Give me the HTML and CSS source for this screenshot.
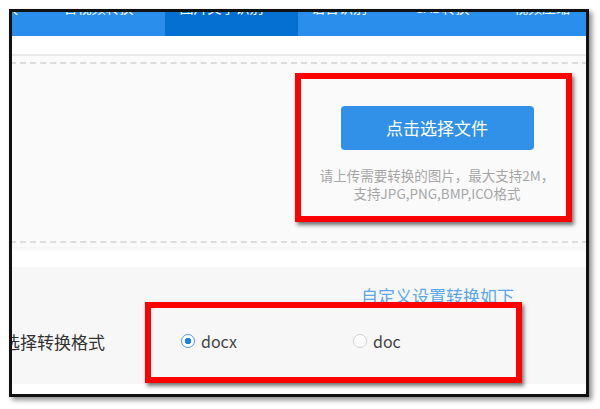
FILE: index.html
```html
<!DOCTYPE html>
<html lang="zh-CN">
<head>
    <meta charset="UTF-8">
    <meta name="viewport" content="width=device-width, initial-scale=1.0">
    <title>图片文字识别</title>
    <link rel="stylesheet" href="styles.css">
</head>
<body>
    <div class="shot">
        <ul class="nav">
            <li class="nav-item nav-first">换</li>
            <li class="nav-item nav-w1">音视频转换</li>
            <li class="nav-item nav-w1 active">图片文字识别</li>
            <li class="nav-item nav-w2">语音识别</li>
            <li class="nav-item nav-w3">CAD转换</li>
            <li class="nav-item nav-w4">视频压缩</li>
        </ul>

        <div class="gap-strip"></div>

        <div class="upload-wrap">
            <div class="upload-box">
                <div class="upload-col">
                    <div class="btn-upload">点击选择文件</div>
                    <p class="upload-tip">请上传需要转换的图片，最大支持2M，</p>
                    <p class="upload-tip">支持JPG,PNG,BMP,ICO格式</p>
                </div>
            </div>
        </div>

        <div class="options">
            <div class="custom-link">自定义设置转换如下</div>
            <div class="format-row">
                <span class="format-label">选择转换格式</span>
                <label class="radio radio-docx checked"><i></i>docx</label>
                <label class="radio"><i></i>doc</label>
            </div>
        </div>

        <!-- 标注框 -->
        <div class="mark mark-upload"></div>
        <div class="mark mark-format"></div>
    </div>
</body>
</html>
```

FILE: styles.css
```css
* {
    margin: 0;
    padding: 0;
}

html,
body {
    height: 100%;
    overflow: hidden;
    background-color: #fff;
}

body {
    font-family: "Noto Sans CJK SC", "Noto Sans", sans-serif;
    font-size: 14px;
    color: #333;
}

.shot {
    width: 574px;
    height: 382px;
    margin: 9px 0 0 9px;
    position: relative;
    overflow: hidden;
    border: 3px solid #111;
    box-shadow: 3px 3px 5px rgba(0,0,0,.45);
    background-color: #fff;
}

/* 顶部导航（截图只露出文字的下半截） */
.nav {
    height: 24px;
    display: flex;
    list-style: none;
    overflow: hidden;
    background-color: #2a8eec;
}

.nav .nav-item {
    height: 36px;
    margin-top: -12px;
    color: #fff;
    font-size: 14px;
    line-height: 14px;
    text-align: center;
    white-space: nowrap;
    overflow: hidden;
}

.nav .nav-first {
    width: 20px;
    text-indent: -8px;
    text-align: left;
}

.nav .nav-w1 {
    width: 133px;
}

.nav .nav-w2 {
    width: 82px;
}

.nav .nav-w3 {
    width: 124px;
}

.nav .nav-w4 {
    width: 76px;
}

.nav .active {
    width: 113px;
    padding-right: 20px;
    background-color: #066fd2;
}

.gap-strip {
    height: 18px;
    border-bottom: 2px solid #e8e8e8;
}

/* 上传区域 */
.upload-wrap {
    padding: 6px 0 4px;
    background-color: #fafafa;
    box-shadow: 0 2px 4px rgba(0,0,0,.06);
}

.upload-box {
    height: 177px;
    margin: 0 -12px;
    display: flex;
    justify-content: flex-end;
    border: 2px dashed #dcdcdc;
}

.upload-col {
    width: 250px;
    margin-right: 34px;
    padding-top: 42px;
    text-align: center;
}

.btn-upload {
    width: 193px;
    height: 44px;
    margin: 0 auto 16px;
    color: #fff;
    font-size: 17px;
    line-height: 44px;
    border-radius: 4px;
    background-color: #3190e8;
}

.upload-tip {
    color: #a6a6a6;
    font-size: 13.5px;
    line-height: 18px;
    white-space: nowrap;
}

/* 转换设置 */
.options {
    height: 117px;
    margin-top: 20px;
    padding-top: 18px;
    box-sizing: border-box;
    background-color: #f7f7f7;
}

.custom-link {
    padding-right: 72px;
    color: #5ba7ee;
    font-size: 17px;
    line-height: 22px;
    text-align: right;
}

.format-row {
    height: 30px;
    margin-top: 19px;
    display: flex;
    align-items: center;
    font-size: 16px;
}

.format-label {
    margin-left: -9px;
    color: #333;
    font-size: 17px;
    white-space: nowrap;
}

.radio {
    display: flex;
    align-items: center;
    color: #444;
}

.radio i {
    width: 14px;
    height: 14px;
    margin-right: 6px;
    box-sizing: border-box;
    border: 1px solid #cfcfcf;
    border-radius: 50%;
    background-color: #fff;
}

.radio-docx {
    width: 172px;
    margin-left: 76px;
}

.radio.checked i {
    border-color: #4a9aea;
    background: radial-gradient(circle, #1d80e6 0, #1d80e6 3px, #fff 3.5px);
}

/* 红色标注框 */
.mark {
    position: absolute;
    box-sizing: border-box;
    border: 6px solid #f00;
    box-shadow: 2px 3px 4px rgba(0,0,0,.55);
}

.mark-upload {
    left: 283px;
    top: 61px;
    width: 277px;
    height: 149px;
}

.mark-format {
    left: 133px;
    top: 290px;
    width: 377px;
    height: 81px;
}
```
